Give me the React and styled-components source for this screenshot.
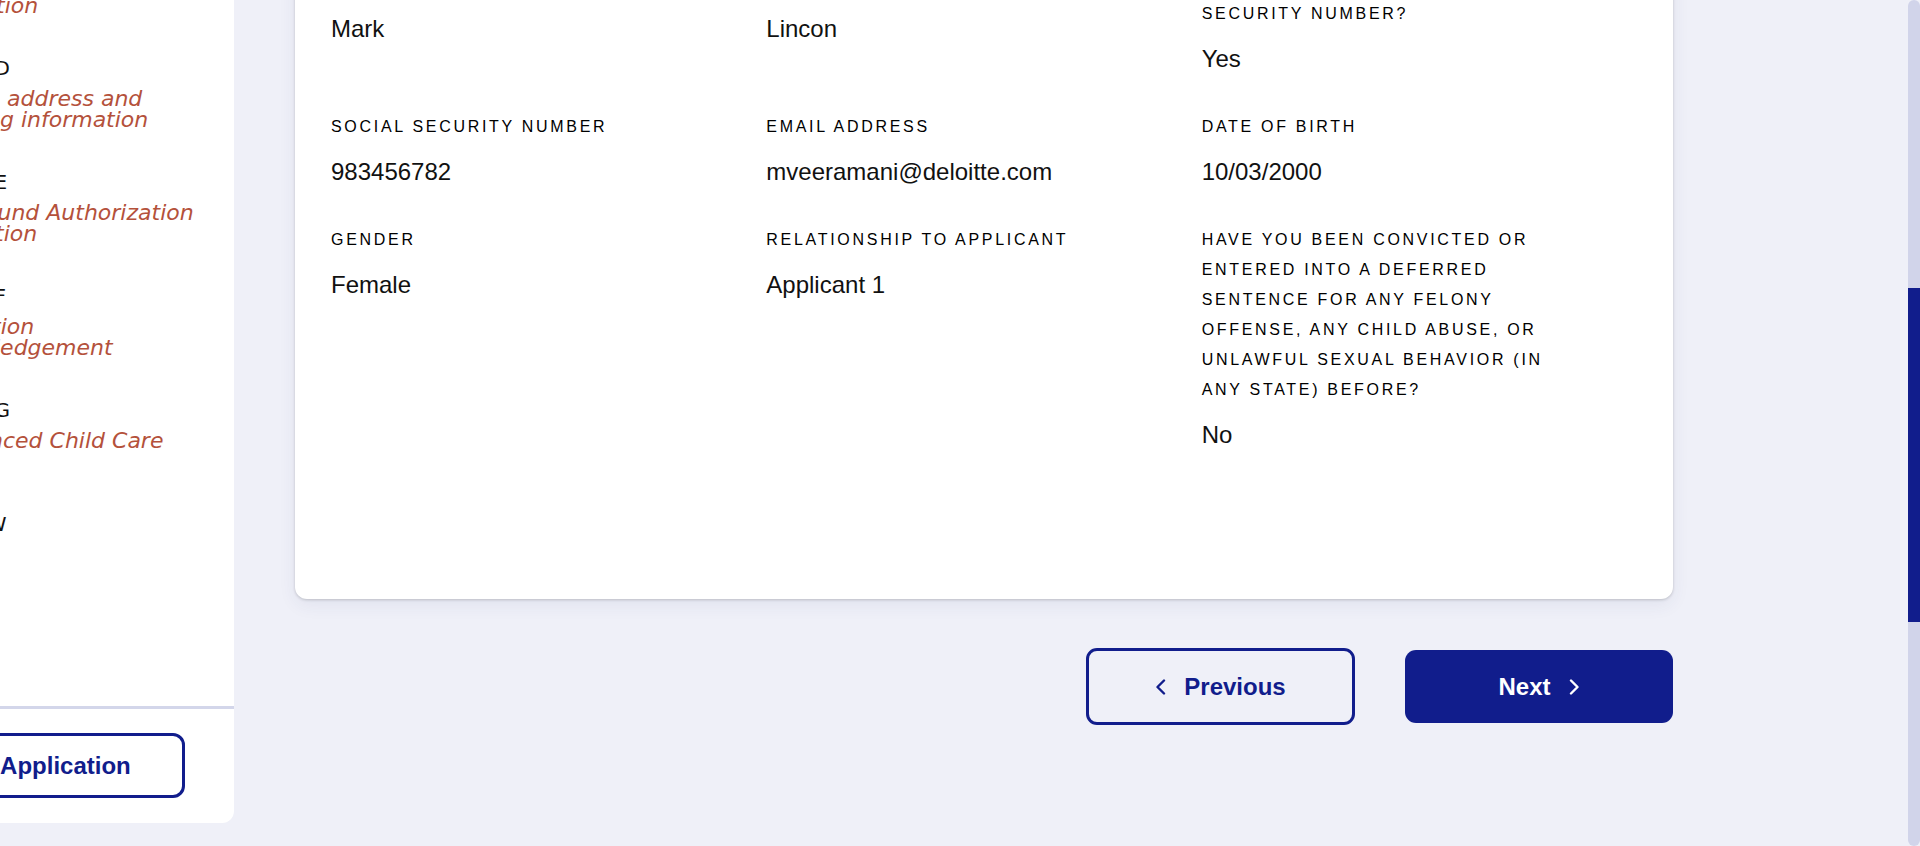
import React from "react";
import styled, { createGlobalStyle } from "styled-components";

const NAVY = "#111d8c";

const GlobalStyle = createGlobalStyle`
  html, body {
    margin: 0;
    padding: 0;
    background: #eff0f8;
    font-family: "Liberation Sans", Arial, sans-serif;
  }
`;

const Page = styled.div`
  display: flex;
  align-items: flex-start;
  height: 846px;
  overflow: hidden;
  background: #eff0f8;
`;

/* ---------- sidebar ---------- */

const Sidebar = styled.aside`
  flex: 0 0 400px;
  margin-left: -166px;
  height: 823px;
  display: flex;
  flex-direction: column;
  background: #fff;
  border-radius: 0 0 12px 0;
  overflow: hidden;
  font-family: "DejaVu Sans", Verdana, sans-serif;
`;

const StepList = styled.div`
  flex: 1;
  margin-top: -58px;
  padding-left: 166px;
  overflow: hidden;
`;

const StepItem = styled.div`
  height: 114px;
`;

const StepTitle = styled.div`
  margin-left: -100px;
  font-size: 20px;
  line-height: 24px;
  color: #111;
  white-space: nowrap;
  text-transform: uppercase;
`;

const StepDesc = styled.div`
  margin-top: 8px;
  font-size: 22px;
  line-height: 21px;
  font-style: italic;
  color: #b4513b;
`;

const DescLine = styled.span`
  display: block;
  white-space: nowrap;
  margin-left: ${(p) => p.$shift || 0}px;
`;

const Divider = styled.hr`
  margin: 0;
  border: 0;
  height: 3px;
  background: #d3d6ea;
`;

const SidebarFooter = styled.div`
  height: 114px;
  box-sizing: border-box;
  padding: 24px 49px 0 50px;
`;

const OutlineButton = styled.button`
  width: 100%;
  height: 65px;
  border: 3px solid ${NAVY};
  border-radius: 12px;
  background: #fff;
  color: ${NAVY};
  font: 700 24px "Liberation Sans", Arial, sans-serif;
  white-space: nowrap;
  cursor: pointer;
`;

/* ---------- main ---------- */

const Main = styled.main`
  flex: 0 0 1378px;
  margin-left: 61px;
  margin-top: -67px;
  display: flex;
  flex-direction: column;
`;

const Card = styled.section`
  display: grid;
  grid-template-columns: repeat(3, 1fr);
  row-gap: 37px;
  align-items: start;
  padding: 36px 36px 148px;
  background: #fff;
  border-radius: 12px;
  box-shadow: 0 1px 3px rgba(0, 0, 0, 0.18), 0 6px 18px rgba(40, 50, 120, 0.07);
`;

const Field = styled.div`
  display: flex;
  flex-direction: column;
`;

const Label = styled.div`
  max-width: 365px;
  font-size: 16px;
  line-height: 30px;
  letter-spacing: 2.7px;
  text-transform: uppercase;
  color: #000;
`;

const Value = styled.div`
  margin-top: 14px;
  font-size: 24px;
  line-height: 32px;
  color: #111;
`;

const Actions = styled.div`
  display: flex;
  justify-content: flex-end;
  align-items: center;
  gap: 50px;
  margin-top: 49px;
`;

const NavButton = styled.button`
  width: ${(p) => (p.$primary ? 268 : 269)}px;
  height: ${(p) => (p.$primary ? 73 : 77)}px;
  display: flex;
  align-items: center;
  justify-content: center;
  gap: 18px;
  box-sizing: border-box;
  border: ${(p) => (p.$primary ? "none" : `3px solid ${NAVY}`)};
  border-radius: 11px;
  background: ${(p) => (p.$primary ? NAVY : "transparent")};
  color: ${(p) => (p.$primary ? "#fff" : NAVY)};
  font: 700 24px "Liberation Sans", Arial, sans-serif;
  cursor: pointer;

  svg {
    flex: none;
  }
`;

/* ---------- scrollbar ---------- */

const ScrollTrack = styled.div`
  flex: 0 0 12px;
  margin-left: auto;
  height: 846px;
  box-sizing: border-box;
  padding-top: 288px;
  background: #d1d4ea;
  border-radius: 6px;
`;

const ScrollThumb = styled.div`
  height: 334px;
  background: ${NAVY};
`;

const Chevron = ({ dir }) => (
  <svg width="11" height="16" viewBox="0 0 11 16" fill="none">
    <polyline
      points={dir === "left" ? "9,1.5 2.5,8 9,14.5" : "2,1.5 8.5,8 2,14.5"}
      stroke="currentColor"
      strokeWidth="2.4"
      strokeLinecap="round"
      strokeLinejoin="round"
    />
  </svg>
);

const steps = [
  { title: "Section C", lines: [["Household", 0], ["tion", -4]] },
  { title: "Section D", lines: [["address and", 7], ["ng information", -14]] },
  { title: "Section E", lines: [["ound Authorization", -16], ["tion", -5]] },
  { title: "Section F", lines: [["tion", -8], ["ledgement", -6]] },
  { title: "Section G", lines: [["nced Child Care", -11]] },
  { title: "Overview", lines: [] },
];

const fields = [
  { label: "First Name", value: "Mark", key: "first" },
  { label: "Last Name", value: "Lincon", key: "last" },
  { label: <>Do you have a social<br />security number?</>, value: "Yes", key: "ssnq" },
  { label: "Social Security Number", value: "983456782", key: "ssn" },
  { label: "Email Address", value: "mveeramani@deloitte.com", key: "email" },
  { label: "Date of Birth", value: "10/03/2000", key: "dob" },
  { label: "Gender", value: "Female", key: "gender" },
  { label: "Relationship to Applicant", value: "Applicant 1", key: "rel" },
  {
    label:
      "Have you been convicted or entered into a deferred sentence for any felony offense, any child abuse, or unlawful sexual behavior (in any state) before?",
    value: "No",
    key: "conv",
  },
];

export default function App() {
  return (
    <>
      <GlobalStyle />
      <Page>
        <Sidebar>
          <StepList>
            {steps.map((s) => (
              <StepItem key={s.title}>
                <StepTitle>{s.title}</StepTitle>
                {s.lines.length > 0 && (
                  <StepDesc>
                    {s.lines.map(([text, shift]) => (
                      <DescLine key={text} $shift={shift}>
                        {text}
                      </DescLine>
                    ))}
                  </StepDesc>
                )}
              </StepItem>
            ))}
          </StepList>
          <Divider />
          <SidebarFooter>
            <OutlineButton>Save Application</OutlineButton>
          </SidebarFooter>
        </Sidebar>

        <Main>
          <Card>
            {fields.map((f) => (
              <Field key={f.key}>
                <Label>{f.label}</Label>
                <Value>{f.value}</Value>
              </Field>
            ))}
          </Card>
          <Actions>
            <NavButton>
              <Chevron dir="left" />
              Previous
            </NavButton>
            <NavButton $primary>
              Next
              <Chevron dir="right" />
            </NavButton>
          </Actions>
        </Main>

        <ScrollTrack>
          <ScrollThumb />
        </ScrollTrack>
      </Page>
    </>
  );
}
